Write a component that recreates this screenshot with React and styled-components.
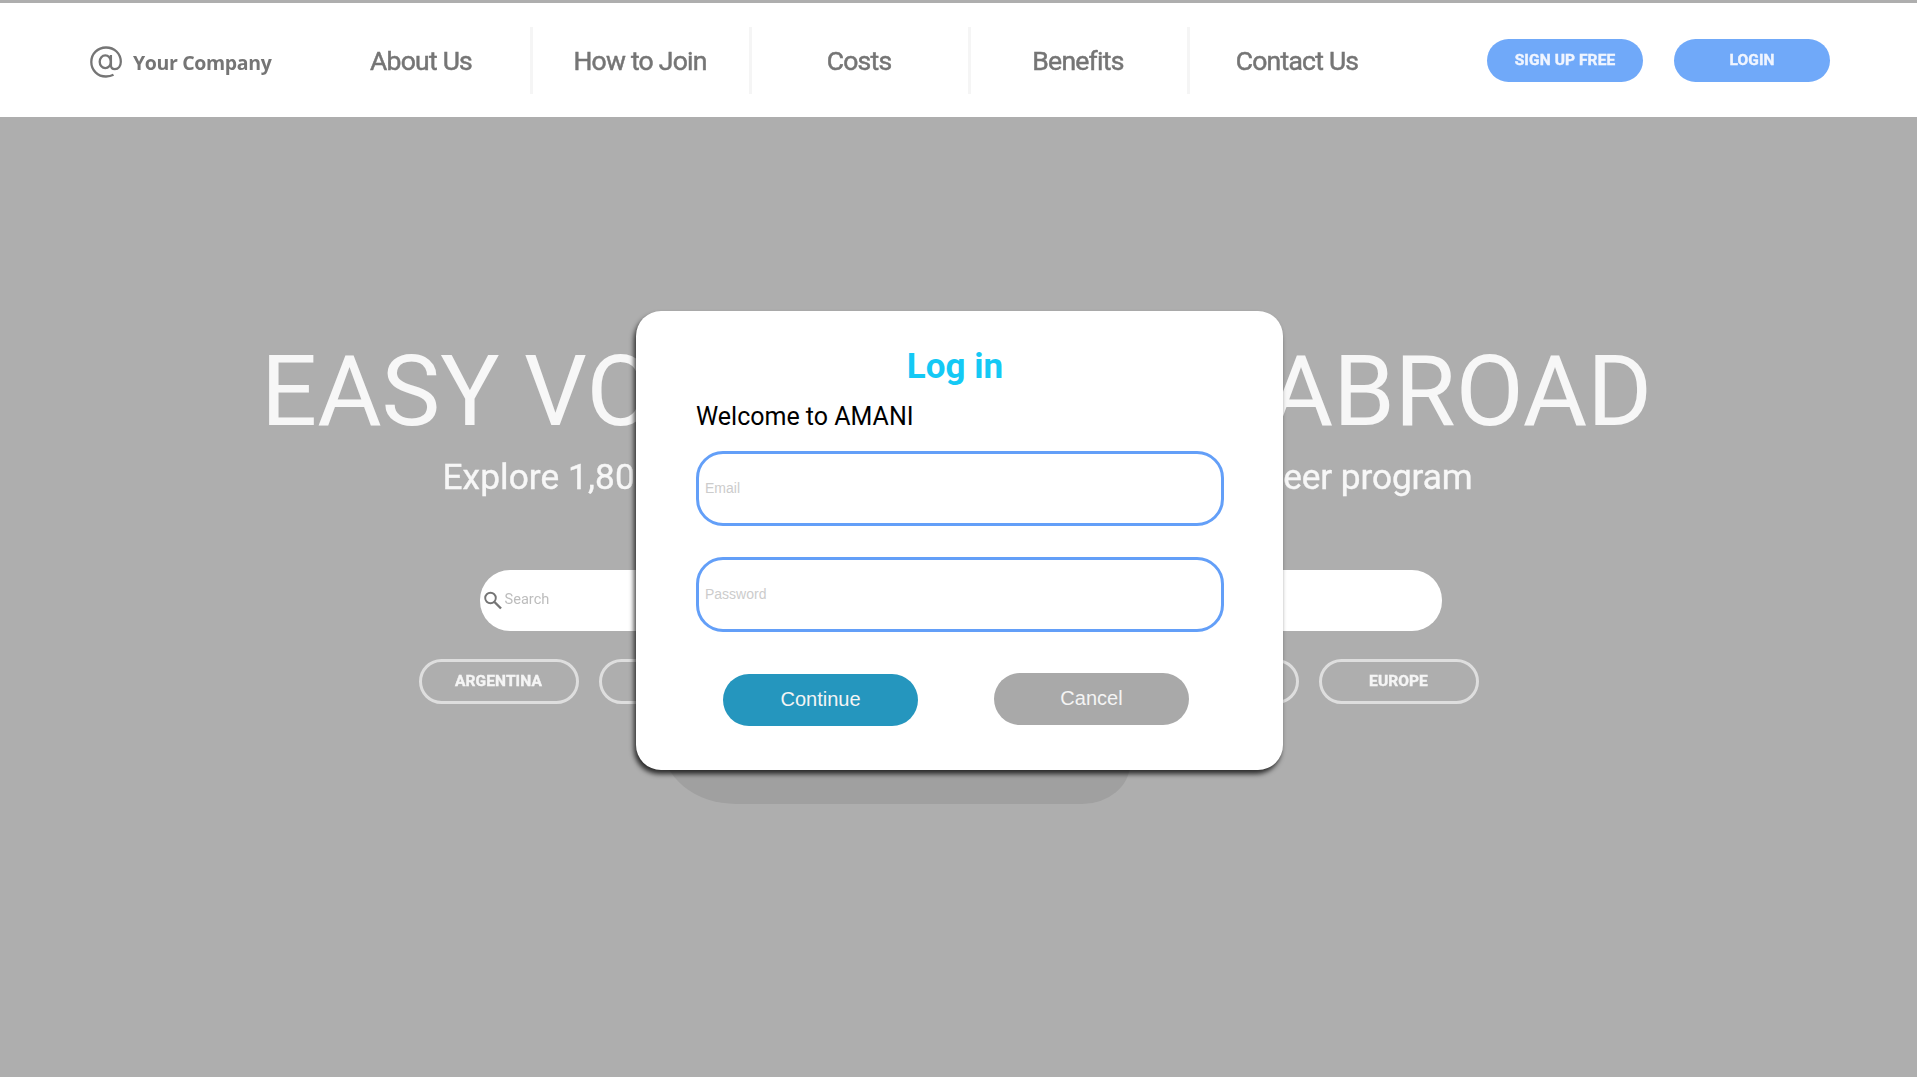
import React from "react";
import styled, { createGlobalStyle } from "styled-components";

const GlobalStyle = createGlobalStyle`
  * { box-sizing: border-box; }
  html, body { margin: 0; padding: 0; height: 100%; overflow: hidden; }
  body { background: #aeaeae; font-family: Roboto, sans-serif; }
  button { font-family: inherit; padding: 0; margin: 0; }
`;

const Page = styled.div`
  position: relative;
  width: 1917px;
  height: 1077px;
  background: #aeaeae;
  overflow: hidden;
`;

const Backdrop = styled.div`
  display: flex;
  flex-direction: column;
  padding-top: 3px;
  filter: blur(0.7px);
`;

const Header = styled.header`
  display: flex;
  align-items: center;
  height: 114px;
  margin: 0 -6px;
  padding: 1px 93px 0 96px;
  background: #fff;
`;

const Brand = styled.div`
  display: flex;
  align-items: center;
  width: 224px;
  gap: 11px;
  padding-top: 3px;
  color: #757575;
`;

const BrandName = styled.span`
  padding-top: 2px;
  font: 700 19.5px/26px "Open Sans", sans-serif;
  letter-spacing: -0.35px;
  white-space: nowrap;
`;

const Nav = styled.nav`
  display: flex;
  height: 67px;
`;

const NavItem = styled.a`
  display: flex;
  align-items: center;
  justify-content: center;
  width: 219px;
  padding-right: 2px;
  border-right: 3px solid ${(p) => (p.$last ? "transparent" : "#f5f5f5")};
  color: #757575;
  font-size: 26.5px;
  letter-spacing: -0.75px;
  -webkit-text-stroke: 0.5px #757575;
`;

const HeaderActions = styled.div`
  display: flex;
  gap: 31px;
  margin-left: auto;
`;

const HeaderButton = styled.button`
  width: 156px;
  height: 43px;
  padding-bottom: 2px;
  border: 0;
  border-radius: 22px;
  background: #70a9f9;
  color: #f0f5ff;
  font-size: 15.5px;
  font-weight: 700;
  letter-spacing: 0.1px;
  -webkit-text-stroke: 0.4px #f0f5ff;
`;

const Hero = styled.main`
  display: flex;
  flex-direction: column;
  align-items: center;
  padding-top: 224px;
`;

const Title = styled.h1`
  display: flex;
  justify-content: space-between;
  width: 1391px;
  margin: 0 4px 0 0;
  color: #f7f7f7;
  font-size: 98.8px;
  font-weight: 400;
  line-height: 100px;
  white-space: nowrap;
`;

const Subtitle = styled.p`
  display: flex;
  justify-content: space-between;
  width: 1030px;
  margin: 16px 2px 0 0;
  color: #f7f7f7;
  font-size: 35.2px;
  letter-spacing: -0.1px;
  line-height: 40px;
  white-space: nowrap;
  -webkit-text-stroke: 0.4px #f7f7f7;
`;

const SubtitleLead = styled.span`
  letter-spacing: 0.1px;
`;

const SearchBar = styled.div`
  display: flex;
  align-items: center;
  gap: 2px;
  width: 962px;
  height: 61px;
  margin: 73px 0 28px 4px;
  padding: 0 0 1px 4px;
  border-radius: 30px;
  background: #fff;
  color: #bdbdbd;
  font-size: 14.6px;
`;

const SearchHint = styled.span`
  padding-bottom: 2px;
`;

const Destinations = styled.div`
  display: flex;
  gap: 20px;
  margin-right: 20px;
`;

const Destination = styled.button`
  width: 160px;
  height: 45px;
  padding-bottom: 1px;
  border: 3px solid #dedede;
  border-radius: 23px;
  background: transparent;
  color: #f5f5f5;
  font-size: 15.5px;
  font-weight: 700;
  letter-spacing: 0.1px;
  -webkit-text-stroke: 0.4px #f5f5f5;
`;

const Shade = styled.div`
  position: absolute;
  left: 662px;
  top: 700px;
  width: 468px;
  height: 104px;
  border-radius: 0 0 48px 74px / 0 0 40px 60px;
  background: #a0a0a0;
  filter: blur(0.7px);
`;

const Dialog = styled.form`
  position: absolute;
  left: 636px;
  top: 311px;
  display: flex;
  flex-direction: column;
  width: 647px;
  height: 459px;
  padding: 35px 59px 0 60px;
  border-radius: 25px;
  background: #fff;
  box-shadow: -2px 4px 5px rgba(0, 0, 0, 0.75);
`;

const DialogTitle = styled.h2`
  margin: 0 10px 0 0;
  color: #14c9f5;
  font-size: 35px;
  font-weight: 700;
  line-height: 42px;
  text-align: center;
`;

const Greeting = styled.p`
  margin: 14px 0 19px;
  color: #000;
  font-size: 25px;
  line-height: 30px;
`;

const Field = styled.input`
  width: 528px;
  height: 75px;
  margin: 0 0 31px;
  padding: 0 6px 2px;
  border: 3px solid #639ff8;
  border-radius: 27px;
  background: #fff;
  outline: 0;
  font: 14px "Liberation Sans", Arial, sans-serif;
  &::placeholder { color: #ccc; opacity: 1; }
`;

const DialogActions = styled.div`
  display: flex;
  align-items: flex-start;
  gap: 76px;
  padding: 9px 0 0 27px;
`;

const DialogButton = styled.button`
  width: 195px;
  height: 52px;
  margin-top: ${(p) => (p.$secondary ? "0.5px" : "2px")};
  padding-bottom: ${(p) => (p.$secondary ? "0" : "1px")};
  border: 0;
  border-radius: 26px;
  background: ${(p) => (p.$secondary ? "#a9a9a9" : "#2596be")};
  color: #f4f4f4;
  font: 20px "Liberation Sans", Arial, sans-serif;
`;

const AtIcon = () => (
  <svg width="32" height="32" viewBox="0 0 32 32" fill="none" stroke="#757575" strokeWidth="2.3">
    <ellipse cx="15.3" cy="15.8" rx="5.6" ry="6.4" />
    <path d="M20.9 9v10.2c0 2.6 1.6 3.9 4 3.9 3.5 0 5.900-3.200 5.900-7.300C30.800 7.300 24.300 1.500 16 1.500S1.300 7.800 1.300 16 7.700 30.500 16 30.500c2.700 0 5.200-.5 7.500-1.700" />
  </svg>
);

const SearchIcon = () => (
  <svg width="19" height="19" viewBox="0 0 19 19" fill="none" stroke="#757575">
    <circle cx="6.500" cy="7" r="5.300" strokeWidth="1.900" />
    <path d="M10.500 11l6.500 6.500" strokeWidth="2.400" />
  </svg>
);

const links = ["About Us", "How to Join", "Costs", "Benefits", "Contact Us"];
const places = ["ARGENTINA", "BRAZIL", "AFRICA", "ASIA", "INDIA", "EUROPE"];

export default function App() {
  return (
    <Page>
      <GlobalStyle />
      <Backdrop>
        <Header>
          <Brand>
            <AtIcon />
            <BrandName>Your Company</BrandName>
          </Brand>
          <Nav>
            {links.map((label, i) => (
              <NavItem key={label} $last={i === links.length - 1}>{label}</NavItem>
            ))}
          </Nav>
          <HeaderActions>
            <HeaderButton>SIGN UP FREE</HeaderButton>
            <HeaderButton>LOGIN</HeaderButton>
          </HeaderActions>
        </Header>
        <Hero>
          <Title>
            <span>EASY VOLUNTEERING</span>
            <span>ABROAD</span>
          </Title>
          <Subtitle>
            <SubtitleLead>Explore 1,800+ options to find</SubtitleLead>
            <span>your ideal volunteer program</span>
          </Subtitle>
          <SearchBar>
            <SearchIcon />
            <SearchHint>Search</SearchHint>
          </SearchBar>
          <Destinations>
            {places.map((name) => (
              <Destination key={name}>{name}</Destination>
            ))}
          </Destinations>
        </Hero>
      </Backdrop>
      <Shade />
      <Dialog>
        <DialogTitle>Log in</DialogTitle>
        <Greeting>Welcome to AMANI</Greeting>
        <Field type="email" placeholder="Email" />
        <Field type="password" placeholder="Password" />
        <DialogActions>
          <DialogButton type="button">Continue</DialogButton>
          <DialogButton type="button" $secondary>Cancel</DialogButton>
        </DialogActions>
      </Dialog>
    </Page>
  );
}
